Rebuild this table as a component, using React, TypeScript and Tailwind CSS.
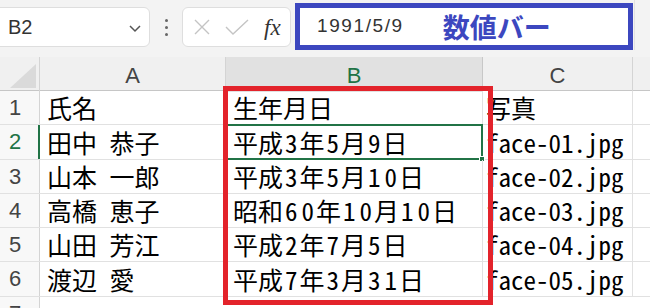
import React from "react";

const rows = [
  { n: "1", a: "氏名", b: "生年月日", c: "写真" },
  { n: "2", a: "田中　恭子", b: "平成3年5月9日", c: "face-01.jpg" },
  { n: "3", a: "山本　一郎", b: "平成3年5月10日", c: "face-02.jpg" },
  { n: "4", a: "高橋　恵子", b: "昭和60年10月10日", c: "face-03.jpg" },
  { n: "5", a: "山田　芳江", b: "平成2年7月5日", c: "face-04.jpg" },
  { n: "6", a: "渡辺　愛", b: "平成7年3月31日", c: "face-05.jpg" },
];

const heights = [34, 35, 34, 34, 34, 35];

function DateText({ s }: { s: string }) {
  return (
    <>
      {s.split("").map((ch, i) =>
        /\d/.test(ch) ? (
          <span key={i} className="inline-block w-[16.5px] text-center">
            {ch}
          </span>
        ) : (
          <span key={i}>{ch}</span>
        )
      )}
    </>
  );
}

export default function App() {
  return (
    <div className="relative w-[650px] h-[308px] overflow-hidden bg-white font-['Liberation_Sans',sans-serif]">
      {/* toolbar */}
      <div className="flex h-[57px] items-start bg-[#f3f3f3] pt-[7px]">
        <div className="ml-[-8px] flex h-[40px] w-[158px] items-center justify-between rounded-[6px] border border-[#dedede] bg-white pl-[15px] pr-[7px]">
          <span className="text-[20px] text-[#333]">B2</span>
          <svg width="14" height="9" viewBox="0 0 14 9" className="mt-[2px]">
            <path d="M2 2 L7 7 L12 2" fill="none" stroke="#555" strokeWidth="1.5" />
          </svg>
        </div>
        <div className="flex h-[40px] w-[32px] flex-col items-center justify-center gap-[4px]">
          <div className="h-[3px] w-[3px] rounded-full bg-[#666]" />
          <div className="h-[3px] w-[3px] rounded-full bg-[#666]" />
          <div className="h-[3px] w-[3px] rounded-full bg-[#666]" />
        </div>
        <div className="flex h-[40px] w-[109px] items-center rounded-[6px] border border-[#dedede] bg-white pl-[10px]">
          <svg width="18" height="18" viewBox="0 0 18 18">
            <path d="M2 2 L16 16 M16 2 L2 16" stroke="#c4c4c4" strokeWidth="1.4" fill="none" />
          </svg>
          <svg width="26" height="18" viewBox="0 0 26 18" className="ml-[13px]">
            <path d="M2 9 L9 16 L24 2" stroke="#c4c4c4" strokeWidth="1.4" fill="none" />
          </svg>
          <span className="ml-[14px] font-['Liberation_Serif',serif] text-[23px] italic leading-none text-[#333]">
            fx
          </span>
        </div>
        <div className="ml-[4px] mt-[-4px] flex h-[47px] w-[338px] items-center border-[5px] border-[#3c47bf] bg-white pl-[17px]">
          <span className="text-[19px] tracking-[1.6px] text-[#333]">1991/5/9</span>
          <span className="ml-[39px] font-['Noto_Sans_CJK_JP',sans-serif] text-[27px] font-bold leading-none text-[#3c47bf]">
            数値バー
          </span>
        </div>
        <div className="ml-[1px] mt-[-7px] h-[50px] w-px bg-[#e2e2e2]" />
      </div>

      {/* column headers */}
      <div className="grid h-[34px] grid-cols-[40px_186px_257px_150px_1fr] border-b border-[#c6c6c6] bg-[#f0f0f0] text-[22px] text-[#444]">
        <div className="flex items-end justify-end border-r border-[#d4d4d4] pb-[4px] pr-[3px]">
          <svg width="26" height="24" viewBox="0 0 26 24">
            <path d="M26 0 L26 24 L0 24 Z" fill="#dadada" />
          </svg>
        </div>
        <div className="flex items-center justify-center border-r border-[#d4d4d4] pt-[2px]">A</div>
        <div className="flex items-center justify-center border-r border-[#c8c8c8] bg-[#e1e1e1] pt-[2px] text-[#217346]">
          B
        </div>
        <div className="flex items-center justify-center border-r border-[#d4d4d4] pt-[2px]">C</div>
        <div />
      </div>

      {/* body */}
      {rows.map((r, i) => (
        <div
          key={r.n}
          style={{ height: heights[i] }}
          className="grid grid-cols-[40px_186px_257px_150px_1fr] border-b border-[#e1e1e1] font-['Noto_Sans_CJK_JP',sans-serif] text-[25px] leading-none text-black [font-feature-settings:'hwid']"
        >
          <div
            className={
              i === 1
                ? "flex items-center border-r-2 border-[#217346] bg-[#f8f8f8] pl-[9px] font-['Liberation_Sans',sans-serif] text-[22px] text-[#217346]"
                : "flex items-center border-r border-[#d4d4d4] bg-[#f8f8f8] pl-[9px] font-['Liberation_Sans',sans-serif] text-[22px] text-[#444]"
            }
          >
            {r.n}
          </div>
          <div className="flex items-center border-r border-[#e1e1e1] pl-[7px] whitespace-nowrap">{r.a}</div>
          <div className="relative flex items-center border-r border-[#e1e1e1] pl-[7px] whitespace-nowrap">
            <DateText s={r.b} />
            {i === 1 && (
              <div className="absolute inset-[-1px] border-2 border-[#217346]">
                <div className="absolute bottom-[-4px] right-[-4px] h-[6px] w-[6px] border border-white bg-[#217346]" />
              </div>
            )}
          </div>
          <div className="flex items-center border-r border-[#e1e1e1] pl-[3px] whitespace-nowrap">{r.c}</div>
          <div />
        </div>
      ))}
      <div className="grid h-[20px] grid-cols-[40px_1fr] font-['Liberation_Sans',sans-serif] text-[22px] text-[#444]">
        <div className="border-r border-[#d4d4d4] bg-[#f8f8f8] pl-[9px]">7</div>
        <div />
      </div>

      {/* red annotation box */}
      <div className="absolute left-[223px] top-[86px] h-[219px] w-[270px] border-[5px] border-[#e3232b]" />
    </div>
  );
}
